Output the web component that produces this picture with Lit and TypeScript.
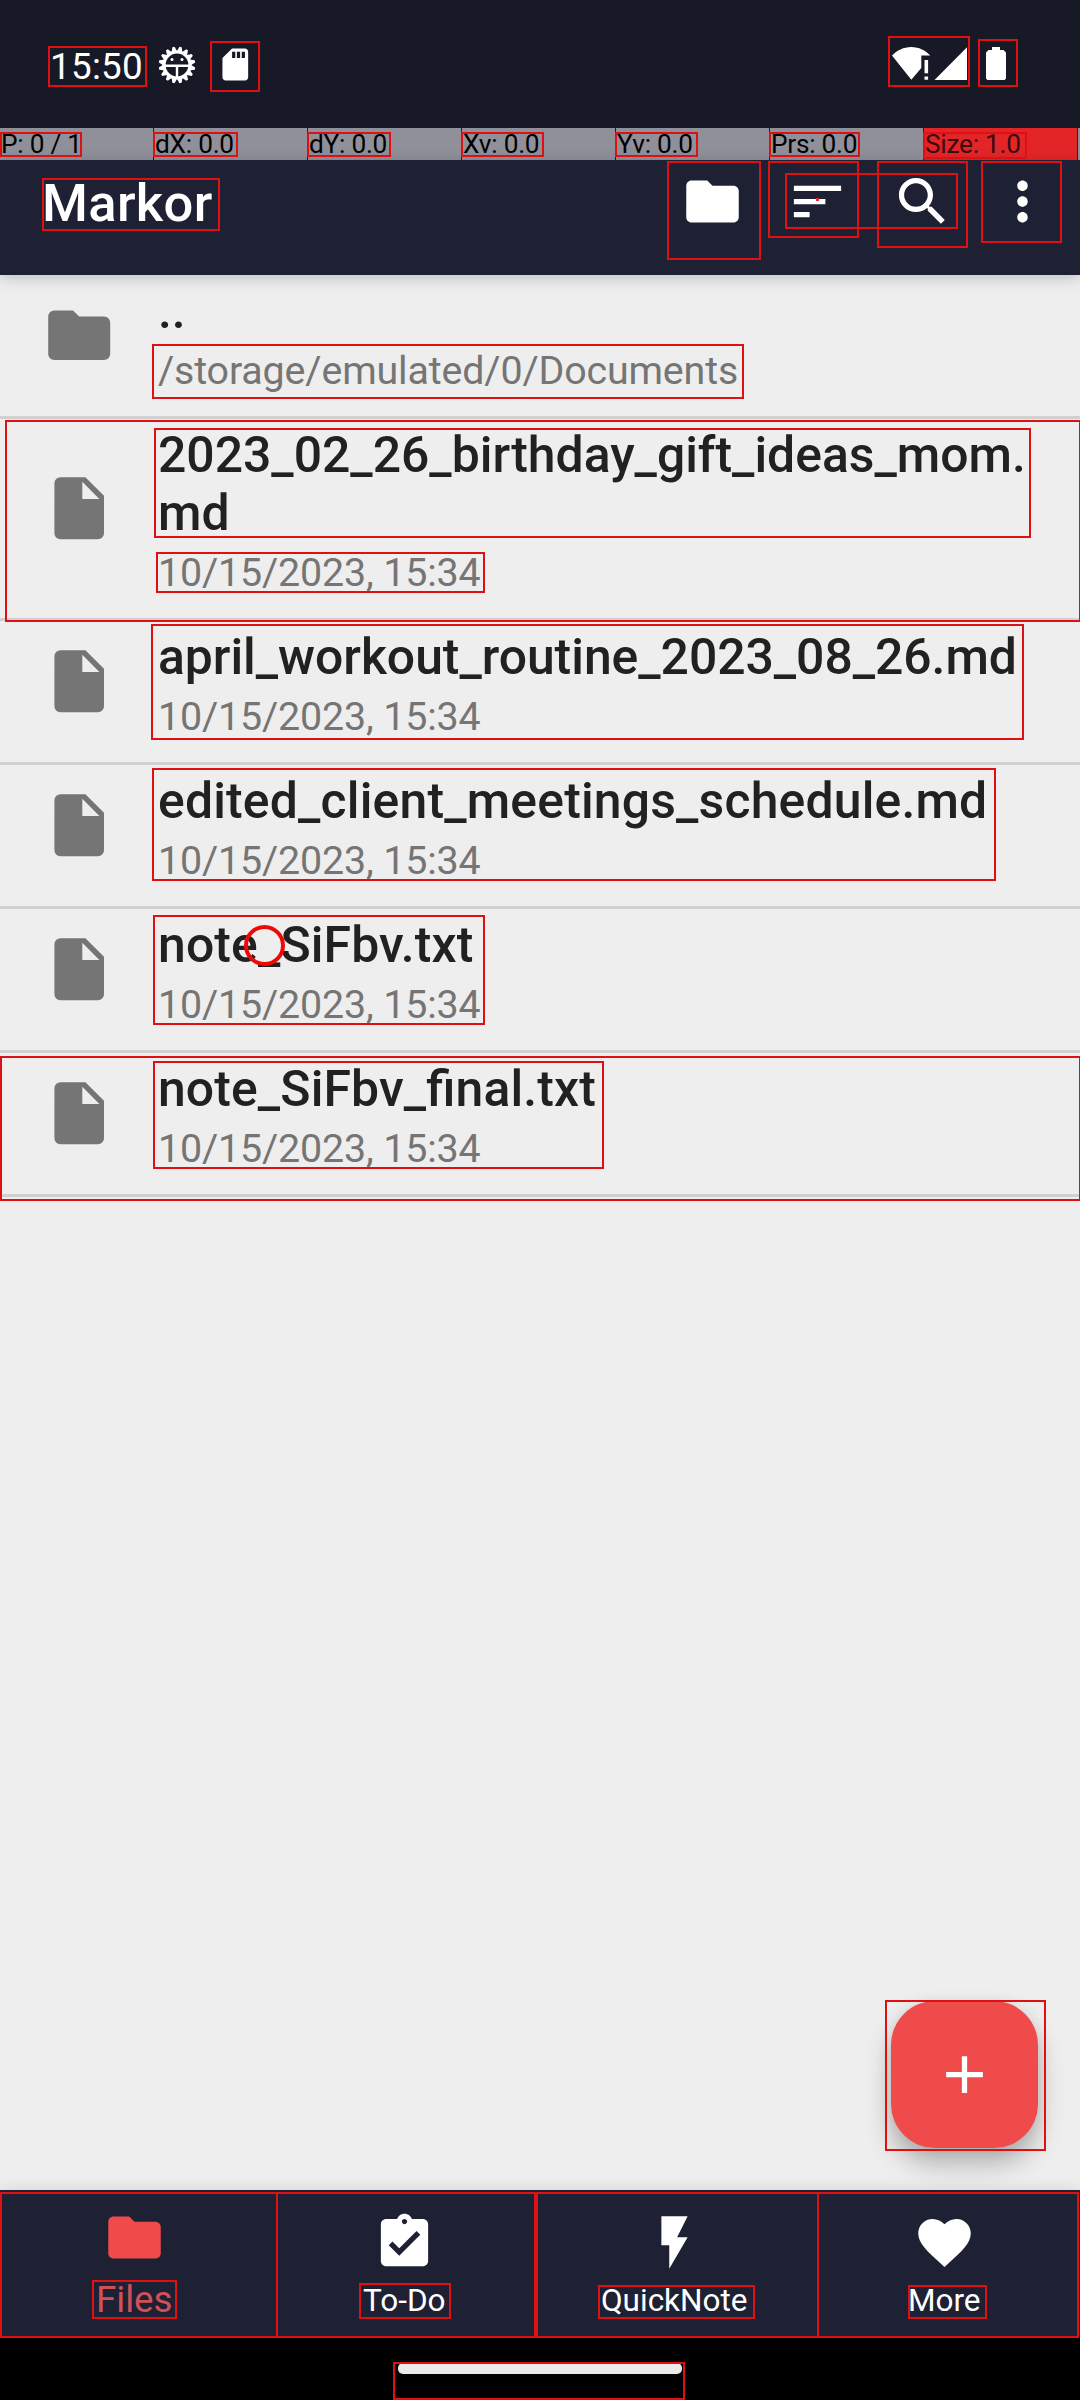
import { LitElement, html, css, svg } from "lit";
import { customElement, property } from "lit/decorators.js";

const ICONS: Record<string, string> = {
  folder: "M10 4H4c-1.1 0-1.99.9-1.99 2L2 18c0 1.1.9 2 2 2h16c1.1 0 2-.9 2-2V8c0-1.1-.9-2-2-2h-8l-2-2z",
  file: "M6 2c-1.1 0-1.99.9-1.99 2L4 20c0 1.1.89 2 1.99 2H18c1.1 0 2-.9 2-2V8l-6-6H6zm7 7V3.5L18.5 9H13z",
  sort: "M3 18h6v-2H3v2zM3 6v2h18V6H3zm0 7h12v-2H3v2z",
  search:
    "M15.5 14h-.79l-.28-.27C15.41 12.59 16 11.11 16 9.5 16 5.91 13.09 3 9.5 3S3 5.91 3 9.5 5.91 16 9.5 16c1.61 0 3.09-.59 4.23-1.57l.27.28v.79l5 4.99L20.49 19l-4.99-5zm-6 0C7.01 14 5 11.99 5 9.5S7.01 5 9.5 5 14 7.01 14 9.5 11.99 14 9.5 14z",
  more: "M12 8c1.1 0 2-.9 2-2s-.9-2-2-2-2 .9-2 2 .9 2 2 2zm0 2c-1.1 0-2 .9-2 2s.9 2 2 2 2-.9 2-2-.9-2-2-2zm0 6c-1.1 0-2 .9-2 2s.9 2 2 2 2-.9 2-2-.9-2-2-2z",
  todo: "M19 3h-4.18C14.4 1.84 13.3 1 12 1c-1.3 0-2.4.84-2.82 2H5c-1.1 0-2 .9-2 2v14c0 1.1.9 2 2 2h14c1.1 0 2-.9 2-2V5c0-1.1-.9-2-2-2zm-7 0c.55 0 1 .45 1 1s-.45 1-1 1-1-.45-1-1 .45-1 1-1zm-2 14l-4-4 1.41-1.41L10 14.17l6.59-6.59L18 9l-8 8z",
  bolt: "M7 2v11h3v9l7-12h-4l4-8z",
  heart:
    "M12 21.35l-1.45-1.32C5.4 15.36 2 12.28 2 8.5 2 5.42 4.42 3 7.5 3c1.74 0 3.41.81 4.5 2.09C13.09 3.81 14.76 3 16.5 3 19.58 3 22 5.42 22 8.5c0 3.78-3.4 6.86-8.55 11.54L12 21.35z",
  add: "M19 13h-6v6h-2v-6H5v-2h6V5h2v6h6v2z",
  sd: "M18 2h-8L4.02 8 4 20c0 1.1.9 2 2 2h12c1.1 0 2-.9 2-2V4c0-1.1-.9-2-2-2zm-6 6h-2V4h2v4zm3 0h-2V4h2v4zm3 0h-2V4h2v4z",
};

@customElement("md-icon")
export class MdIcon extends LitElement {
  @property() name = "folder";
  static styles = css`
    :host { display: block; width: 63px; height: 63px; flex: none; }
    .glyph { display: block; width: 100%; height: 100%; fill: currentColor; }
  `;
  render() {
    return html`<svg class="glyph" viewBox="0 0 24 24"><path d=${ICONS[this.name]}></path></svg>`;
  }
}

@customElement("status-bar")
export class StatusBar extends LitElement {
  static styles = css`
    :host { display: flex; align-items: flex-start; height: 128px; box-sizing: border-box; background: #171926; color: #fff; }
    .clock { margin: 45px 0 0 50px; width: 108px; font-size: 36.75px; line-height: 43px; letter-spacing: 0.3px; white-space: nowrap; }
    .gear { display: block; margin-top: 46px; width: 38px; height: 38px; }
    .sd { margin: 45px 0 0 20px; width: 38.6px; height: 39px; }
    .space { flex: 1; }
    .net { display: block; margin: 46px 0 0; width: 76px; height: 35px; fill: #fff; }
    .battery { display: block; margin: 46px 74px 0 18px; width: 20px; height: 35px; fill: #fff; }
  `;
  render() {
    const teeth = Array.from({ length: 16 }, (_, i) => i * 22.5 + 11.25);
    return html`
      <div class="clock">15:50</div>
      <svg class="gear" viewBox="-19 -19 38 38">
        ${teeth.map((a) => svg`<path d="M-3 -13L-1.1 -18.3H1.1L3 -13Z" fill="#fff" transform="rotate(${a})"></path>`)}
        <circle r="13" fill="none" stroke="#fff" stroke-width="3.2"></circle>
        <path d="M-13 .8H13M0 .8V13" stroke="#fff" stroke-width="2.4" fill="none"></path>
        <circle cx="-5" cy="-5.5" r="1.5" fill="#fff"></circle>
        <circle cx="5" cy="-5.5" r="1.5" fill="#fff"></circle>
      </svg>
      <md-icon class="sd" name="sd"></md-icon>
      <div class="space"></div>
      <svg class="net" viewBox="0 0 76 35">
        <path d="M0 9.5C5 4.5 11.5 1 19.3 1S33.5 4.5 38.3 9.5H29.3V22L19.3 33.8Z"></path>
        <rect x="32.5" y="14" width="3.6" height="13.3"></rect>
        <rect x="32.5" y="30.5" width="3.6" height="3.2"></rect>
        <path d="M42.5 34L75 1.3V34Z"></path>
      </svg>
      <svg class="battery" viewBox="0 0 20 35">
        <path d="M6 1H14V4H17.5L20 6.5V32.5L18.5 34H1.5L0 32.5V6.5L2.5 4H6Z"></path>
      </svg>
    `;
  }
}

@customElement("pointer-strip")
export class PointerStrip extends LitElement {
  static styles = css`
    :host { display: grid; grid-template-columns: repeat(7, 153px) 1fr; column-gap: 1px; height: 32px; background: #1e2034; }
    .cell { background: #90909a; color: #000; font-size: 26.25px; line-height: 32px; letter-spacing: -0.25px; padding-left: 1px; white-space: nowrap; }
    .hot { background: #e32528; color: #3c0a0e; }
  `;
  render() {
    const cells = ["P: 0 / 1", "dX: 0.0", "dY: 0.0", "Xv: 0.0", "Yv: 0.0", "Prs: 0.0"];
    return html`${cells.map((c) => html`<div class="cell">${c}</div>`)}
      <div class="cell hot">Size: 1.0</div>
      <div class="cell"></div>`;
  }
}

@customElement("top-bar")
export class TopBar extends LitElement {
  static styles = css`
    :host { display: flex; align-items: flex-start; height: 115px; background: #1e2034; color: #fff; position: relative; box-shadow: 0 3px 14px rgba(0, 0, 0, 0.2); }
    .title { flex: 1; margin: 11px 0 0 42px; font-size: 52.5px; font-weight: 500; line-height: 64px; letter-spacing: 0.35px; }
    .actions { display: flex; gap: 42px; margin: 9.5px 26px 0 0; }
    .actions md-icon:last-child { margin-left: -5px; }
  `;
  render() {
    return html`<div class="title">Markor</div>
      <div class="actions">
        ${["folder", "sort", "search", "more"].map((n) => html`<md-icon name=${n}></md-icon>`)}
      </div>`;
  }
}

@customElement("file-row")
export class FileRow extends LitElement {
  @property() icon = "file";
  @property() name = "";
  @property() detail = "";
  @property({ type: Number }) tracking = 0;
  static styles = css`
    :host { display: flex; align-items: center; box-sizing: border-box; padding: 0 42px 21px 42px; border-bottom: 3px solid #d0d0d0; }
    .icon { width: 74.4px; height: 74.4px; color: #757575; }
    .text { flex: 1; min-width: 0; padding-top: 7px; margin-left: 41.6px; }
    .name { font-size: 49.875px; font-weight: 500; line-height: 58px; color: #212121; overflow-wrap: anywhere; font-feature-settings: "liga" 1; }
    .detail { font-size: 39.375px; line-height: 46px; letter-spacing: -0.14px; margin-top: 8px; margin-bottom: 1px; color: #757575; }
  `;
  render() {
    return html`<md-icon class="icon" name=${this.icon}></md-icon>
      <div class="text">
        <div class="name" style="letter-spacing:${this.tracking}px">${this.name}</div>
        <div class="detail">${this.detail}</div>
      </div>`;
  }
}

@customElement("bottom-nav")
export class BottomNav extends LitElement {
  static styles = css`
    :host { display: grid; grid-template-columns: repeat(4, 1fr); height: 147px; background: #1e2034; color: #fff; position: relative; box-shadow: 0 0 14px rgba(0, 0, 0, 0.12); }
    .tab { display: flex; flex-direction: column; align-items: center; box-sizing: border-box; padding: 21px 1.5px 0 0; }
    .label { font-size: 31.5px; line-height: 38px; margin-top: 8px; }
    .active { color: #ef4b4b; padding-top: 16px; }
    .active .label { font-size: 36.75px; line-height: 44px; margin-top: 9px; color: #d05058; }
  `;
  render() {
    const tabs = [["folder", "Files"], ["todo", "To-Do"], ["bolt", "QuickNote"], ["heart", "More"]];
    return html`${tabs.map(
      ([icon, label], i) => html`<div class="tab ${i === 0 ? "active" : ""}">
        <md-icon name=${icon}></md-icon>
        <div class="label">${label}</div>
      </div>`
    )}`;
  }
}

/* Bounds of each highlighted region: left, top, right, bottom. */
const BOUNDS: number[][] = [
  [48, 46, 147, 87], [210, 41, 260, 92], [888, 36, 970, 87], [978, 39, 1018, 87],
  [0, 132, 82, 157], [153, 132, 238, 157], [307, 132, 391, 157], [461, 132, 544, 157],
  [615, 132, 698, 157], [769, 132, 860, 157], [923, 132, 1027, 159],
  [42, 178, 220, 231], [667, 161, 761, 260], [768, 161, 859, 238], [785, 173, 958, 229],
  [877, 161, 968, 248], [981, 161, 1062, 243],
  [152, 344, 744, 399], [5, 420, 1081, 622], [154, 428, 1031, 538], [156, 552, 485, 593],
  [151, 624, 1024, 740], [152, 768, 996, 881], [153, 915, 485, 1025],
  [0, 1056, 1081, 1201], [153, 1061, 604, 1169], [885, 2000, 1046, 2151],
  [0, 2192, 278, 2338], [276, 2192, 536, 2338], [536, 2192, 819, 2338], [817, 2192, 1079, 2338],
  [92, 2280, 177, 2319], [359, 2283, 451, 2319], [598, 2285, 755, 2319], [908, 2285, 987, 2319],
  [393, 2362, 685, 2400],
];

@customElement("bounds-overlay")
export class BoundsOverlay extends LitElement {
  static styles = css`
    :host { display: block; position: absolute; inset: 0; overflow: hidden; pointer-events: none; }
    .box { position: absolute; box-sizing: border-box; border: 2px solid #de1012; }
    .touch { position: absolute; box-sizing: border-box; left: 244px; top: 925px; width: 41px; height: 41px; border: 4px solid #ee0808; border-radius: 50%; }
    .dot { position: absolute; left: 816px; top: 198px; width: 3px; height: 3px; background: #e0283a; }
  `;
  render() {
    return html`${BOUNDS.map(
      ([l, t, r, b]) => html`<div class="box" style="left:${l}px;top:${t}px;width:${r - l}px;height:${b - t}px"></div>`
    )}
      <div class="touch"></div>
      <div class="dot"></div>`;
  }
}

const STAMP = "10/15/2023, 15:34";
const FILES: { name: string; detail: string; icon?: string; tracking?: number }[] = [
  { name: "..", detail: "/storage/emulated/0/Documents", icon: "folder" },
  { name: "2023_02_26_birthday_gift_ideas_mom.md", detail: STAMP },
  { name: "april_workout_routine_2023_08_26.md", detail: STAMP, tracking: -0.03 },
  { name: "edited_client_meetings_schedule.md", detail: STAMP, tracking: 0.19 },
  { name: "note_SiFbv.txt", detail: STAMP, tracking: 0.15 },
  { name: "note_SiFbv_final.txt", detail: STAMP, tracking: 0.13 },
];

@customElement("app-root")
export class AppRoot extends LitElement {
  static styles = css`
    :host { display: flex; flex-direction: column; position: relative; width: 1080px; height: 2400px; overflow: hidden; background: #eeeeee; font-family: Roboto, "Liberation Sans", sans-serif; }
    .list { flex: 1; display: flex; flex-direction: column; }
    .fab { position: absolute; left: 891px; top: 2001px; width: 147px; height: 147px; border-radius: 44px; background: #ef4b4b; color: #fff; display: flex; align-items: center; justify-content: center; box-shadow: 0 16px 26px rgba(0, 0, 0, 0.25), 0 2px 16px rgba(0, 0, 0, 0.08); }
    .system { height: 63px; background: #000; display: flex; justify-content: center; }
    .handle { width: 284px; height: 11px; margin-top: 26px; border-radius: 5px; background: #ebebeb; }
  `;
  render() {
    return html`
      <status-bar></status-bar>
      <pointer-strip></pointer-strip>
      <top-bar></top-bar>
      <div class="list">
        ${FILES.map(
          (f) => html`<file-row
            icon=${f.icon ?? "file"}
            name=${f.name}
            detail=${f.detail}
            .tracking=${f.tracking ?? 0}
          ></file-row>`
        )}
      </div>
      <div class="fab"><md-icon name="add"></md-icon></div>
      <bottom-nav></bottom-nav>
      <div class="system"><div class="handle"></div></div>
      <bounds-overlay></bounds-overlay>
    `;
  }
}
